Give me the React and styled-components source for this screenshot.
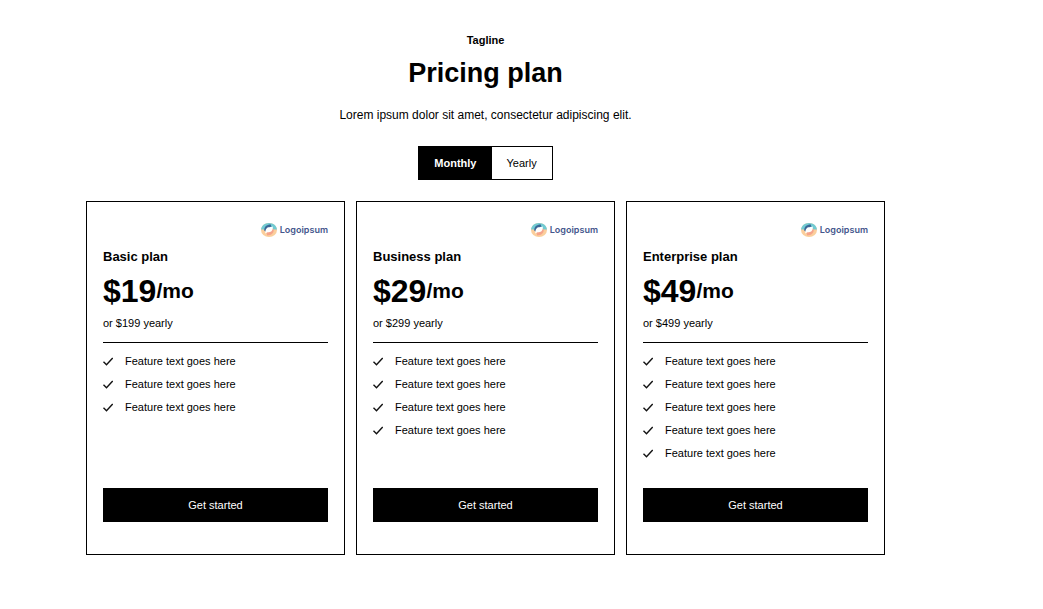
import React, { useState } from "react";
import styled, { createGlobalStyle } from "styled-components";

const GlobalStyle = createGlobalStyle`
  *, *::before, *::after { box-sizing: border-box; }
  body {
    margin: 0;
    background: #fff;
    color: #000;
    font-family: "Liberation Sans", Arial, sans-serif;
    font-size: 11px;
    line-height: 16px;
  }
  h1, h2, p, ul { margin: 0; padding: 0; }
  button { font: inherit; cursor: pointer; }
`;

const Page = styled.main`
  display: flex;
  flex-direction: column;
  gap: 21px;
  padding: 32px 158px 54px 86px;
`;

const Header = styled.header`
  display: flex;
  flex-direction: column;
  align-items: center;
  text-align: center;
`;

const Tagline = styled.p`
  font-weight: 600;
`;

const Heading = styled.h1`
  margin-top: 9px;
  font-size: 27px;
  line-height: 32px;
  font-weight: 700;
`;

const Lead = styled.p`
  margin-top: 18px;
  font-size: 12px;
`;

const Toggle = styled.div`
  display: flex;
  margin-top: 23px;
  border: 1px solid #000;
`;

const ToggleButton = styled.button`
  height: 32px;
  padding: 0 15px;
  border: 0;
  background: ${(p) => (p.$active ? "#000" : "#fff")};
  color: ${(p) => (p.$active ? "#fff" : "#000")};
  font-weight: ${(p) => (p.$active ? 600 : 400)};
`;

const Cards = styled.section`
  display: grid;
  grid-template-columns: repeat(3, 1fr);
  gap: 11px;
`;

const Card = styled.article`
  display: flex;
  flex-direction: column;
  padding: 20px 16px 32px;
  border: 1px solid #000;
`;

const LogoRow = styled.div`
  display: flex;
  align-items: center;
  justify-content: flex-end;
  gap: 3px;
  height: 16px;
  color: #44568c;
  font-family: Inter, sans-serif;
  font-size: 9px;
  font-weight: 600;
`;

const PlanName = styled.h2`
  margin-top: 11px;
  font-size: 13px;
  line-height: 16px;
  font-weight: 700;
`;

const Price = styled.p`
  display: flex;
  align-items: center;
  margin-top: 8px;
  font-size: 32px;
  line-height: 36px;
  font-weight: 700;
`;

const Period = styled.span`
  font-size: 21px;
`;

const Yearly = styled.p`
  margin-top: 6px;
`;

const Features = styled.ul`
  display: flex;
  flex: 1;
  flex-direction: column;
  gap: 7px;
  margin-top: 11px;
  padding-top: 10px;
  border-top: 1px solid #000;
  list-style: none;
`;

const Feature = styled.li`
  display: flex;
  align-items: center;
  gap: 12px;
`;

const StartButton = styled.button`
  height: 34px;
  margin-top: 27px;
  border: 0;
  background: #000;
  color: #fff;
`;

function Logo() {
  return (
    <LogoRow>
      <svg width="16" height="14" viewBox="0 0 16 14" aria-hidden="true">
        <ellipse cx="8" cy="7" rx="8" ry="7" fill="#fbcf9c" />
        <path d="M0 6.5C0.4 2.8 3.8 0 8 0s7.6 2.8 8 6.5Z" fill="#72cbd3" />
        <path d="M3.2 7.5C3.2 3.8 5.5 1.6 9.8 1.6L10.5 4.5L5 9Z" fill="#3c6796" />
        <path d="M12.8 6.5C12.8 10.2 10.5 12.4 6.2 12.4L5.5 9.5L11 5Z" fill="#f5a48c" />
        <path d="M4.2 10.4C4.2 6.2 6 4.3 8.2 4.3C10 4.3 10.8 3.8 11.8 3.6C12 7.6 10.2 9.2 8 9.2C6.2 9.2 5.6 9.8 4.2 10.4Z" fill="#fff" />
      </svg>
      <span>Logoipsum</span>
    </LogoRow>
  );
}

function Check() {
  return (
    <svg width="10" height="16" viewBox="0 0 10 16" fill="none" aria-hidden="true">
      <path d="M0.5 8.7L3.5 11.7L9.7 5" stroke="#111" strokeWidth="1.4" />
    </svg>
  );
}

const plans = [
  { name: "Basic plan", price: "$19", yearly: "$199", features: 3 },
  { name: "Business plan", price: "$29", yearly: "$299", features: 4 },
  { name: "Enterprise plan", price: "$49", yearly: "$499", features: 5 },
];

export default function App() {
  const [billing, setBilling] = useState("Monthly");
  return (
    <>
      <GlobalStyle />
      <Page>
        <Header>
          <Tagline>Tagline</Tagline>
          <Heading>Pricing plan</Heading>
          <Lead>Lorem ipsum dolor sit amet, consectetur adipiscing elit.</Lead>
          <Toggle role="group" aria-label="Billing period">
            {["Monthly", "Yearly"].map((label) => (
              <ToggleButton
                key={label}
                type="button"
                $active={billing === label}
                aria-pressed={billing === label}
                onClick={() => setBilling(label)}
              >
                {label}
              </ToggleButton>
            ))}
          </Toggle>
        </Header>
        <Cards>
          {plans.map((plan) => (
            <Card key={plan.name}>
              <Logo />
              <PlanName>{plan.name}</PlanName>
              <Price>
                {plan.price}
                <Period>/mo</Period>
              </Price>
              <Yearly>or {plan.yearly} yearly</Yearly>
              <Features>
                {Array.from({ length: plan.features }, (_, i) => (
                  <Feature key={i}>
                    <Check />
                    <span>Feature text goes here</span>
                  </Feature>
                ))}
              </Features>
              <StartButton type="button">Get started</StartButton>
            </Card>
          ))}
        </Cards>
      </Page>
    </>
  );
}
